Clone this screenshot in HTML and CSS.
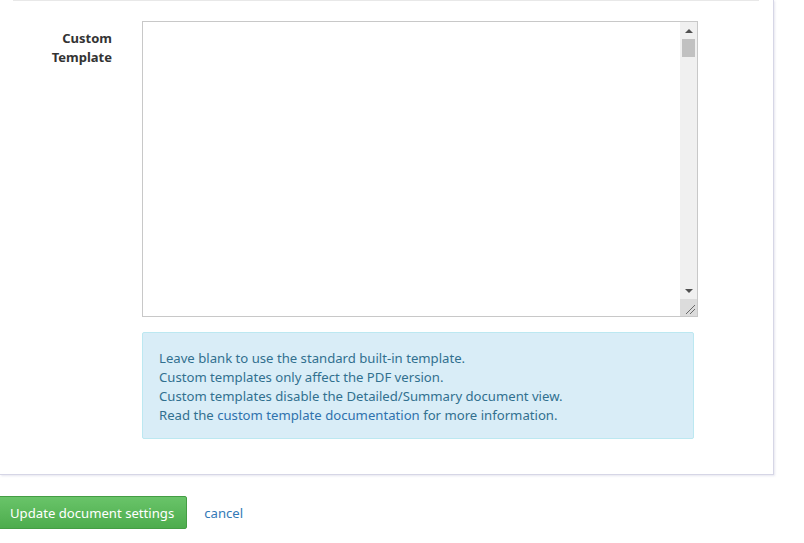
FILE: index.html
```html
<!DOCTYPE html>
<html>
<head>
<meta charset="utf-8">
<link rel="stylesheet" href="styles.css">
</head>
<body>
<div class="page">
  <div class="panel">
    <div class="divider"></div>
    <div class="form-group">
      <label class="form-label" for="tpl">Custom<br>Template</label>
      <div class="form-field">
        <div class="textarea-wrap">
          <textarea id="tpl" class="form-textarea"></textarea>
          <div class="fake-scroll">
            <div class="sb-btn"><span class="tri-up"></span></div>
            <div class="sb-track"><div class="sb-thumb"></div></div>
            <div class="sb-btn"><span class="tri-down"></span></div>
            <div class="sb-corner">
              <svg width="17" height="17" viewBox="0 0 17 17"><path d="M6 15 L15 6 M10 15 L15 10" stroke="#6a6a6a" stroke-width="1" fill="none"/></svg>
            </div>
          </div>
        </div>
        <div class="help-box">
          Leave blank to use the standard built-in template.<br>
          Custom templates only affect the PDF version.<br>
          Custom templates disable the Detailed/Summary document view.<br>
          Read the <a href="#" class="help-link">custom template documentation</a> for more information.
        </div>
      </div>
    </div>
  </div>
  <div class="actions">
    <button class="btn-success" type="button">Update document settings</button>
    <a href="#" class="cancel-link">cancel</a>
  </div>
</div>
</body>
</html>
```

FILE: styles.css
```css
html, body {
  margin: 0;
  padding: 0;
  background: #fff;
}
body {
  font-family: "Noto Sans", "Open Sans", sans-serif;
  font-size: 13px;
  line-height: 19px;
  color: #333;
}
.page {
  width: 804px;
}
.panel {
  width: 774px;
  height: 475px;
  box-sizing: border-box;
  border-right: 1px solid #d6d6e6;
  border-bottom: 1px solid #d6d6e6;
  box-shadow: 1px 1px 2px rgba(180, 180, 210, 0.35);
  background: #fff;
}
.divider {
  margin-left: 13px;
  width: 746px;
  height: 1px;
  background: #e8e8e8;
}
.form-group {
  display: flex;
  margin-top: 20px;
}
.form-label {
  width: 112px;
  padding-right: 15px;
  padding-top: 8px;
  text-align: right;
  font-weight: bold;
  color: #333;
}
.form-field {
  padding-left: 15px;
}
.textarea-wrap {
  position: relative;
  width: 556px;
  height: 296px;
}
.form-textarea {
  display: block;
  box-sizing: border-box;
  width: 556px;
  height: 296px;
  margin: 0;
  border: 1px solid #c8c8c8;
  resize: none;
  overflow: hidden;
  background: #fff;
  font: inherit;
}
.fake-scroll {
  position: absolute;
  top: 1px;
  right: 1px;
  bottom: 1px;
  width: 17px;
  background: #f0f0f0;
  display: flex;
  flex-direction: column;
}
.sb-btn {
  height: 17px;
  display: flex;
  align-items: center;
  justify-content: center;
}
.tri-up {
  width: 0;
  height: 0;
  border-left: 4px solid transparent;
  border-right: 4px solid transparent;
  border-bottom: 4px solid #505050;
}
.tri-down {
  width: 0;
  height: 0;
  border-left: 4px solid transparent;
  border-right: 4px solid transparent;
  border-top: 4px solid #505050;
}
.sb-track {
  flex: 1;
}
.sb-thumb {
  margin: 0 2px;
  height: 18px;
  background: #c1c1c1;
}
.sb-corner {
  height: 17px;
  background: #dcdcdc;
}
.sb-corner svg {
  display: block;
}
.help-box {
  margin-top: 15px;
  width: 552px;
  height: 107px;
  box-sizing: border-box;
  padding: 16px 16px 14px;
  background: #d9edf7;
  border: 1px solid #bce8f1;
  color: #31708f;
  border-radius: 2px;
  font-size: 13.15px;
}
.help-link {
  color: #2f72ad;
  text-decoration: none;
}
.actions {
  margin-top: 21px;
  display: flex;
  align-items: center;
}
.btn-success {
  margin-left: -3px;
  height: 33px;
  padding: 6px 12px;
  border: 1px solid #449d44;
  border-radius: 2px;
  background: linear-gradient(#69c469, #4dac4d);
  color: #fff;
  font: inherit;
  font-size: 13.15px;
  line-height: 19px;
  padding-top: 7px;
  padding-bottom: 5px;
  cursor: pointer;
}
.cancel-link {
  margin-left: 17px;
  margin-top: 2px;
  color: #337ab7;
  text-decoration: none;
  font-size: 13.15px;
}
```
